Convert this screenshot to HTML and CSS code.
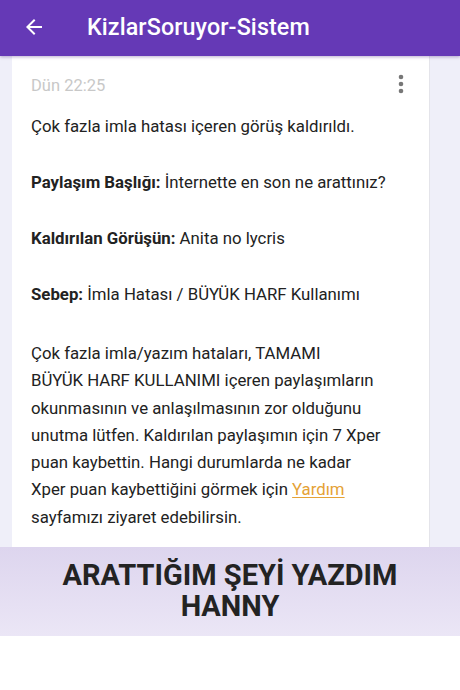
FILE: index.html
```html
<!DOCTYPE html>
<html lang="tr">
<head>
<meta charset="utf-8">
<link rel="stylesheet" href="styles.css">
</head>
<body>
<header class="appbar">
  <svg class="back" width="24" height="24" viewBox="0 0 24 24"><path d="M20 11H7.83l5.59-5.59L12 4l-8 8 8 8 1.41-1.41L7.83 13H20v-2z" fill="#fff"/></svg>
  <h1 class="title">KizlarSoruyor-Sistem</h1>
</header>
<main class="content">
  <section class="card">
    <div class="meta">
      <span class="time">Dün 22:25</span>
      <svg class="more" width="6" height="20" viewBox="0 0 6 20"><circle cx="3" cy="3" r="2.3" fill="#777"/><circle cx="3" cy="10" r="2.3" fill="#777"/><circle cx="3" cy="17" r="2.3" fill="#777"/></svg>
    </div>
    <p class="line">Çok fazla imla hatası içeren görüş kaldırıldı.</p>
    <p class="line"><b>Paylaşım Başlığı:</b> İnternette en son ne arattınız?</p>
    <p class="line"><b>Kaldırılan Görüşün:</b> Anita no lycris</p>
    <p class="line"><b>Sebep:</b> İmla Hatası / BÜYÜK HARF Kullanımı</p>
    <p class="line para">Çok fazla imla/yazım hataları, TAMAMI<br>BÜYÜK HARF KULLANIMI içeren paylaşımların<br>okunmasının ve anlaşılmasının zor olduğunu<br>unutma lütfen. Kaldırılan paylaşımın için 7 Xper<br>puan kaybettin. Hangi durumlarda ne kadar<br>Xper puan kaybettiğini görmek için <a class="link" href="#">Yardım</a><br>sayfamızı ziyaret edebilirsin.</p>
  </section>
</main>
<div class="banner">ARATTIĞIM ŞEYİ YAZDIM<br>HANNY</div>
<div class="footer"></div>
</body>
</html>
```
FILE: styles.css
```css
* { box-sizing: border-box; }
html, body { margin: 0; padding: 0; }
body {
  width: 460px;
  height: 690px;
  overflow: hidden;
  font-family: Roboto, "Noto Sans", sans-serif;
  background: #fff;
}
.appbar {
  height: 56px;
  background: #6539b6;
  display: flex;
  align-items: center;
  padding-left: 22px;
  box-shadow: 0 1px 3px rgba(60, 30, 120, 0.35);
  position: relative;
  z-index: 1;
}
.back { flex: none; margin-top: -2px; }
.title {
  margin: -3px 0 0 41px;
  color: #fff;
  font-size: 23.3px;
  font-weight: 500;
  letter-spacing: 0.1px;
}
.content {
  height: 491px;
  background: #efeff9;
  padding-left: 12px;
  overflow: hidden;
}
.card {
  width: 418px;
  height: 100%;
  background: #fff;
  border-right: 1px solid #e4e4ea;
  padding: 17px 0 0 19px;
}
.meta {
  display: flex;
  align-items: center;
  justify-content: space-between;
  padding-right: 25px;
  height: 24px;
}
.time {
  color: #c8c8c8;
  font-size: 16.5px;
}
.more { margin-top: -3px; }
.line {
  margin: 0;
  font-size: 16.8px;
  line-height: 28px;
  color: #222;
}
.meta + .line { margin-top: 15px; }
.line + .line { margin-top: 28px; }
.line b { font-weight: 700; }
.line.para { margin-top: 32px; line-height: 27.3px; }
.link {
  color: #e5a236;
  text-decoration: underline;
  text-underline-offset: 2px;
}
.banner {
  height: 89px;
  background: linear-gradient(#ddd5ee, #ebe6f6);
  text-align: center;
  color: #232323;
  font-weight: 700;
  font-size: 29px;
  line-height: 31px;
  padding-top: 13px;
}
.footer {
  height: 54px;
  background: #fff;
}
```
